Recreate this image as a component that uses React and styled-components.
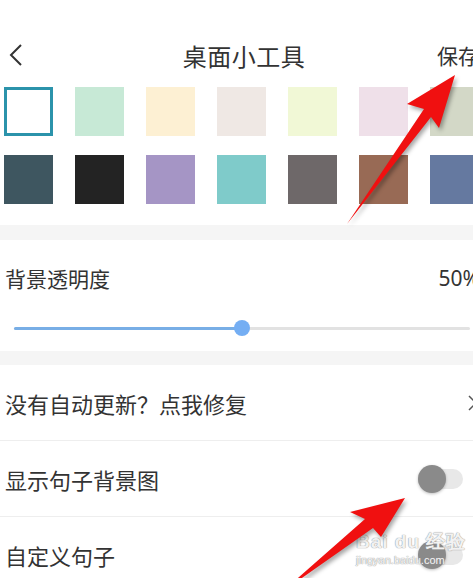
import React, { useState } from 'react';
import styled, { createGlobalStyle } from 'styled-components';

const GlobalStyle = createGlobalStyle`
  html, body {
    margin: 0;
    padding: 0;
    background: #fff;
    overflow: hidden;
  }
  body {
    font-family: "Noto Sans CJK SC", "Noto Sans", sans-serif;
    color: #333;
  }
`;

const Page = styled.div`
  position: relative;
  width: 486px;
  height: 578px;
  overflow: hidden;
  background: #fff;
`;

const Header = styled.header`
  margin-top: 30px;
  height: 50px;
  display: grid;
  grid-template-columns: 1fr auto 1fr;
  align-items: center;
  padding: 0 7px 0 9px;
`;

const BackButton = styled.button`
  justify-self: start;
  border: none;
  background: none;
  padding: 0;
  display: flex;
  align-items: center;
  color: #333;
`;

const Title = styled.h1`
  margin: 0;
  font-size: 24px;
  font-weight: 400;
  color: #333;
  letter-spacing: 0.5px;
`;

const SaveText = styled.span`
  justify-self: end;
  font-size: 21px;
  color: #333;
`;

const Swatches = styled.div`
  display: grid;
  grid-template-columns: repeat(7, 49px);
  column-gap: 22px;
  row-gap: 19px;
  padding: 7px 0 21px 4px;
`;

const Swatch = styled.div`
  width: 49px;
  height: 49px;
  box-sizing: border-box;
  background: ${(p) => p.$color};
  border: ${(p) => (p.$selected ? '3px solid #2b93ab' : 'none')};
`;

const Band = styled.div`
  height: ${(p) => p.$h}px;
  background: #f5f5f5;
`;

const SliderSection = styled.section`
  padding: 24px 6px 15px 5px;
`;

const LabelRow = styled.div`
  display: flex;
  justify-content: space-between;
  align-items: center;
  height: 28px;
  font-size: 21px;
`;

const Value = styled.span`
  font-family: "Noto Sans", sans-serif;
  font-size: 21px;
  color: #333;
`;

const SliderTrack = styled.div`
  position: relative;
  margin: 28px 10px 0 9px;
  height: 16px;
  display: flex;
  align-items: center;
`;

const TrackLine = styled.div`
  flex: 1;
  height: 3px;
  background: #e2e2e2;
  border-radius: 2px;
  position: relative;
`;

const TrackFill = styled.div`
  height: 3px;
  background: #78aee6;
  border-radius: 2px;
`;

const Thumb = styled.div`
  position: absolute;
  top: 50%;
  width: 16px;
  height: 16px;
  margin: -8px 0 0 -8px;
  border-radius: 50%;
  background: #74aef3;
`;

const Row = styled.div`
  height: 75px;
  display: flex;
  align-items: center;
  justify-content: space-between;
  padding: 0 ${(p) => p.$pr}px 0 5px;
  border-bottom: 1px solid #eeeeee;
  font-size: 22px;
  color: #333;
`;

const Toggle = styled.div`
  position: relative;
  width: 45px;
  height: 20px;
  border-radius: 10px;
  background: #e8e8e8;
`;

const Knob = styled.div`
  position: absolute;
  left: 0;
  top: -4px;
  width: 28px;
  height: 28px;
  border-radius: 50%;
  background: #8a8a8a;
  box-shadow: 0 1px 3px rgba(0, 0, 0, 0.25);
`;

const Overlay = styled.svg`
  position: absolute;
  left: 0;
  top: 0;
  pointer-events: none;
  filter: drop-shadow(2px 3px 2px rgba(0, 0, 0, 0.35));
`;

const Watermark = styled.div`
  position: absolute;
  left: 356px;
  top: 531px;
  color: rgba(255, 255, 255, 0.9);
  text-shadow: 0 0 1px #999, 0 0 1px #999;
  font-family: "Liberation Sans", sans-serif;
  pointer-events: none;
`;

const Brand = styled.div`
  font-size: 19px;
  font-weight: 700;
  line-height: 22px;
  letter-spacing: 1px;
`;

const Domain = styled.div`
  font-size: 11px;
  line-height: 14px;
`;

const topColors = ['#ffffff', '#c7e9d6', '#fdf0d3', '#efe8e4', '#f1f8d6', '#efe0e9', '#d3d8c7'];
const bottomColors = ['#3e5660', '#232323', '#a595c5', '#7fcbca', '#6e6869', '#986a55', '#6579a0'];

export default function App() {
  const [selected] = useState(0);
  const opacity = 50;

  return (
    <Page>
      <GlobalStyle />
      <Header>
        <BackButton>
          <svg width="14" height="24" viewBox="0 0 14 24">
            <path d="M12 2 L2 12 L12 22" fill="none" stroke="#333" strokeWidth="2" />
          </svg>
        </BackButton>
        <Title>桌面小工具</Title>
        <SaveText>保存</SaveText>
      </Header>

      <Swatches>
        {topColors.map((c, i) => (
          <Swatch key={c} $color={c} $selected={i === selected} />
        ))}
        {bottomColors.map((c) => (
          <Swatch key={c} $color={c} />
        ))}
      </Swatches>

      <Band $h={15} />

      <SliderSection>
        <LabelRow>
          <span>背景透明度</span>
          <Value>{opacity}%</Value>
        </LabelRow>
        <SliderTrack>
          <TrackLine>
            <TrackFill style={{ width: `${opacity}%` }} />
          </TrackLine>
          <Thumb style={{ left: `${opacity}%` }} />
        </SliderTrack>
      </SliderSection>

      <Band $h={14} />

      <Row $pr={9}>
        <span>没有自动更新？点我修复</span>
        <svg width="9" height="16" viewBox="0 0 9 16">
          <path d="M1 1 L8 8 L1 15" fill="none" stroke="#555" strokeWidth="1.5" />
        </svg>
      </Row>
      <Row $pr={23}>
        <span>显示句子背景图</span>
        <Toggle>
          <Knob />
        </Toggle>
      </Row>
      <Row $pr={23}>
        <span>自定义句子</span>
        <Toggle>
          <Knob />
        </Toggle>
      </Row>

      <Watermark>
        <Brand>Bai du 经验</Brand>
        <Domain>jingyan.baidu.com</Domain>
      </Watermark>

      <Overlay width="486" height="578" viewBox="0 0 486 578">
        <polygon
          points="455,75 407,104 424,109 347,224 431,117 439,128"
          fill="#f01010"
        />
        <polygon
          points="405,498 350,512 365,519 282,592 373,528 381,537"
          fill="#f01010"
        />
      </Overlay>
    </Page>
  );
}
